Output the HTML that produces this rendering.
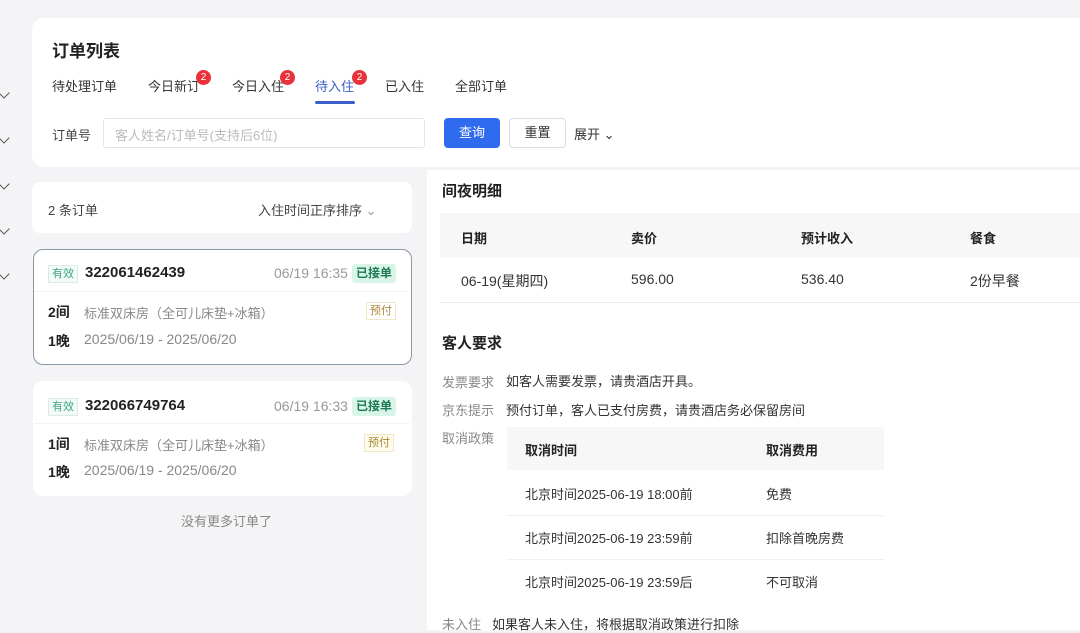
<!DOCTYPE html>
<html><head><meta charset="utf-8"><style>
*{margin:0;padding:0;box-sizing:border-box}
body{width:1080px;height:626px;overflow:hidden;background:#f4f4f6;font-family:"Liberation Sans","Noto Sans CJK SC",sans-serif;color:#222;position:relative}
.a{position:absolute;white-space:nowrap}
.chev{position:absolute;left:0;width:8px;height:8px;border-right:1.5px solid #555;border-bottom:1.5px solid #555;transform:rotate(45deg)}
.badge{position:absolute;width:15px;height:15px;border-radius:50%;background:#e8323c;color:#fff;font-size:10px;text-align:center;line-height:15px}
.card{position:absolute;left:33px;width:379px;background:#fff;border-radius:10px}
.tag{position:absolute;font-size:11px;border:1px solid #d7ece5;color:#3aa383;background:#f3faf7;padding:0 3px;line-height:16px}
.ok{position:absolute;font-size:12px;background:#d9f5ea;color:#1d7a55;padding:0 4px;line-height:19px;border-radius:3px;font-weight:bold}
.g{color:#888}
</style></head><body>
<div class="chev" style="top:89px"></div>
<div class="chev" style="top:134px"></div>
<div class="chev" style="top:180px"></div>
<div class="chev" style="top:225px"></div>
<div class="chev" style="top:270px"></div>

<div class="a" style="left:32px;top:18px;width:1060px;height:149px;background:#fff;border-radius:12px"></div>
<div class="a" style="left:52px;top:37px;font-size:17px;font-weight:bold">订单列表</div>
<div class="a" style="left:52px;top:76px;font-size:13px;color:#333">待处理订单</div>
<div class="a" style="left:148px;top:76px;font-size:13px;color:#333">今日新订</div>
<div class="badge" style="left:196px;top:70px">2</div>
<div class="a" style="left:232px;top:76px;font-size:13px;color:#333">今日入住</div>
<div class="badge" style="left:280px;top:70px">2</div>
<div class="a" style="left:315px;top:76px;font-size:13px;color:#3b5fc9">待入住</div>
<div class="badge" style="left:352px;top:70px">2</div>
<div class="a" style="left:315px;top:101px;width:40px;height:3px;background:#3b5fc9;border-radius:2px"></div>
<div class="a" style="left:385px;top:76px;font-size:13px;color:#333">已入住</div>
<div class="a" style="left:455px;top:76px;font-size:13px;color:#333">全部订单</div>

<div class="a" style="left:52px;top:125px;font-size:13px;color:#444">订单号</div>
<div class="a" style="left:103px;top:118px;width:322px;height:30px;border:1px solid #e4e4e4;border-radius:3px"></div>
<div class="a" style="left:115px;top:125px;font-size:13px;color:#bbb">客人姓名/订单号(支持后6位)</div>
<div class="a" style="left:444px;top:118px;width:56px;height:30px;background:#2f6bef;border-radius:4px;color:#fff;font-size:13px;text-align:center;line-height:30px">查询</div>
<div class="a" style="left:509px;top:118px;width:57px;height:30px;border:1px solid #ddd;border-radius:4px;font-size:13px;text-align:center;line-height:28px;color:#333">重置</div>
<div class="a" style="left:574px;top:124px;font-size:13px;color:#333">展开 ⌄</div>

<div class="a" style="left:32px;top:182px;width:380px;height:51px;background:#fff;border-radius:8px"></div>
<div class="a" style="left:48px;top:200px;font-size:13px;color:#444">2 条订单</div>
<div class="a" style="left:258px;top:200px;font-size:13px;color:#444">入住时间正序排序 <span style="color:#999">⌄</span></div>

<div class="card" style="top:249px;height:116px;border:1.5px solid #8a97a6"></div>
<div class="tag" style="left:48px;top:265px">有效</div>
<div class="a" style="left:85px;top:264px;font-size:15px;font-weight:bold">322061462439</div>
<div class="a" style="left:274px;top:265px;font-size:14px;color:#999">06/19 16:35</div>
<div class="ok" style="left:352px;top:264px">已接单</div>
<div class="a" style="left:34px;top:291px;width:376px;height:1px;background:#f3f3f3"></div>
<div class="a" style="left:48px;top:302px;font-size:14px;font-weight:bold">2间</div>
<div class="a g" style="left:84px;top:303px;font-size:13px">标准双床房（全可儿床垫+冰箱）</div>
<div class="a" style="left:366px;top:302px;font-size:11px;border:1px solid #f0e6c8;color:#a88a3a;padding:0 3px;line-height:16px">预付</div>
<div class="a" style="left:48px;top:331px;font-size:14px;font-weight:bold">1晚</div>
<div class="a g" style="left:84px;top:331px;font-size:14px">2025/06/19 - 2025/06/20</div>

<div class="card" style="top:381px;height:115px"></div>
<div class="tag" style="left:48px;top:398px">有效</div>
<div class="a" style="left:85px;top:397px;font-size:15px;font-weight:bold">322066749764</div>
<div class="a" style="left:274px;top:398px;font-size:14px;color:#999">06/19 16:33</div>
<div class="ok" style="left:352px;top:397px">已接单</div>
<div class="a" style="left:34px;top:423px;width:376px;height:1px;background:#f3f3f3"></div>
<div class="a" style="left:48px;top:434px;font-size:14px;font-weight:bold">1间</div>
<div class="a g" style="left:84px;top:435px;font-size:13px">标准双床房（全可儿床垫+冰箱）</div>
<div class="a" style="left:364px;top:434px;font-size:11px;border:1px solid #f0e6c8;color:#a88a3a;background:#fffbec;padding:0 3px;line-height:16px">预付</div>
<div class="a" style="left:48px;top:462px;font-size:14px;font-weight:bold">1晚</div>
<div class="a g" style="left:84px;top:462px;font-size:14px">2025/06/19 - 2025/06/20</div>
<div class="a g" style="left:181px;top:511px;font-size:13px">没有更多订单了</div>

<div class="a" style="left:427px;top:170px;width:660px;height:460px;background:#fff"></div>
<div class="a" style="left:442px;top:180px;font-size:15px;font-weight:bold">间夜明细</div>
<div class="a" style="left:440px;top:213px;width:640px;height:45px;background:#f7f7f8"></div>
<div class="a" style="left:461px;top:228px;font-size:13px;font-weight:bold">日期</div>
<div class="a" style="left:631px;top:228px;font-size:13px;font-weight:bold">卖价</div>
<div class="a" style="left:801px;top:228px;font-size:13px;font-weight:bold">预计收入</div>
<div class="a" style="left:970px;top:228px;font-size:13px;font-weight:bold">餐食</div>
<div class="a" style="left:461px;top:271px;font-size:14px;color:#333">06-19(星期四)</div>
<div class="a" style="left:631px;top:271px;font-size:14px;color:#333">596.00</div>
<div class="a" style="left:801px;top:271px;font-size:14px;color:#333">536.40</div>
<div class="a" style="left:970px;top:271px;font-size:14px;color:#333">2份早餐</div>
<div class="a" style="left:440px;top:302px;width:640px;height:1px;background:#eee"></div>

<div class="a" style="left:442px;top:332px;font-size:15px;font-weight:bold">客人要求</div>
<div class="a g" style="left:442px;top:372px;font-size:13px">发票要求</div>
<div class="a" style="left:506px;top:371px;font-size:13px;color:#333">如客人需要发票，请贵酒店开具。</div>
<div class="a g" style="left:442px;top:400px;font-size:13px">京东提示</div>
<div class="a" style="left:506px;top:400px;font-size:13px;color:#333">预付订单，客人已支付房费，请贵酒店务必保留房间</div>
<div class="a g" style="left:442px;top:428px;font-size:13px">取消政策</div>
<div class="a" style="left:507px;top:427px;width:377px;height:43px;background:#f7f7f8"></div>
<div class="a" style="left:525px;top:440px;font-size:13px;font-weight:bold">取消时间</div>
<div class="a" style="left:766px;top:440px;font-size:13px;font-weight:bold">取消费用</div>
<div class="a" style="left:525px;top:484px;font-size:13px;color:#333">北京时间2025-06-19 18:00前</div>
<div class="a" style="left:766px;top:484px;font-size:13px;color:#333">免费</div>
<div class="a" style="left:507px;top:515px;width:377px;height:1px;background:#f0f0f0"></div>
<div class="a" style="left:525px;top:528px;font-size:13px;color:#333">北京时间2025-06-19 23:59前</div>
<div class="a" style="left:766px;top:528px;font-size:13px;color:#333">扣除首晚房费</div>
<div class="a" style="left:507px;top:559px;width:377px;height:1px;background:#f0f0f0"></div>
<div class="a" style="left:525px;top:572px;font-size:13px;color:#333">北京时间2025-06-19 23:59后</div>
<div class="a" style="left:766px;top:572px;font-size:13px;color:#333">不可取消</div>
<div class="a g" style="left:442px;top:614px;font-size:13px">未入住</div>
<div class="a" style="left:492px;top:614px;font-size:13px;color:#333">如果客人未入住，将根据取消政策进行扣除</div>
</body></html>
